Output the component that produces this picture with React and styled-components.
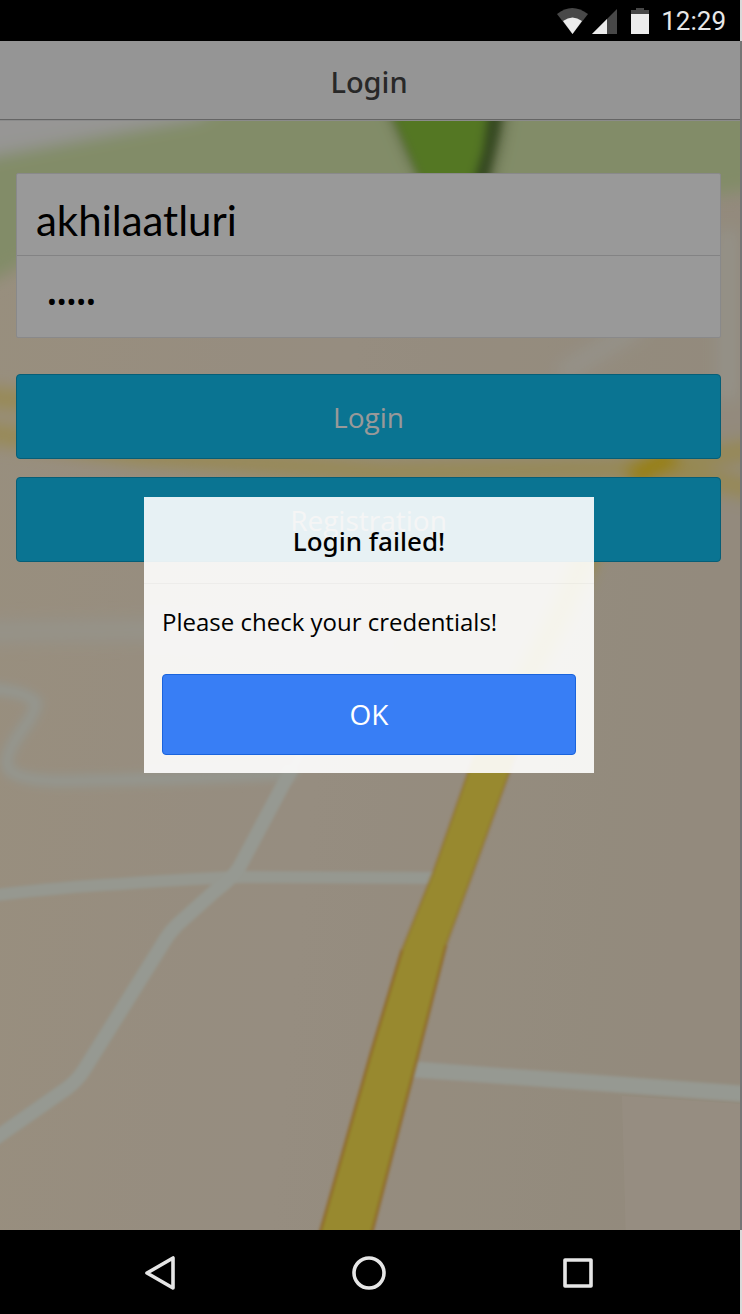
import React, { useState } from "react";
import styled, { createGlobalStyle, css } from "styled-components";

const GlobalStyle = createGlobalStyle`
  *, *::before, *::after { box-sizing: border-box; }
  body {
    margin: 0;
    background: #d9d9d9;
    font-family: "Open Sans", "Noto Sans", sans-serif;
  }
`;

const Device = styled.div`
  display: flex;
  flex-direction: column;
  min-height: 100vh;
  padding-right: 2px;
`;

const StatusBar = styled.div`
  display: flex;
  align-items: center;
  justify-content: flex-end;
  height: 41px;
  padding-right: 14px;
  background: #000;
  color: #e8e8e8;
`;

const StatusIcons = styled.svg`
  display: block;
  width: 92px;
  height: 26px;
  margin-right: 12px;
`;

const Clock = styled.time`
  font: 400 26px/40px Roboto, sans-serif;
`;

const Screen = styled.div`
  position: relative;
  flex: 1;
  display: flex;
  flex-direction: column;
  box-shadow: 2px 0 0 #757575;
`;

const TitleBar = styled.header`
  height: 79px;
  border-bottom: 1px solid #a8a8a8;
  background: #f8f8f8;
  color: #444;
`;

const Title = styled.h1`
  margin: 0;
  padding-right: 2px;
  font-family: "Noto Sans", "Open Sans", sans-serif;
  font-size: 29px;
  font-weight: 500;
  line-height: 82px;
  text-align: center;
`;

const Content = styled.main`
  position: relative;
  flex: 1;
  padding: 52px 19px 24px 16px;
  border-top: 1px solid #e8e8e8;
`;

const MapBackground = styled.svg`
  position: absolute;
  inset: 0;
  width: 100%;
  height: 100%;
`;

const Form = styled.form`
  position: relative;
  display: flex;
  flex-direction: column;
`;

const FieldList = styled.div`
  margin-bottom: 36px;
  border: 1px solid #e4e4e6;
  border-radius: 2px;
  background: #fff;
`;

const Field = styled.input`
  display: block;
  width: 100%;
  height: 81px;
  border: 0;
  outline: 0;
  background: transparent;
  color: #000;
  ${({ type }) =>
    type === "password"
      ? css`
          padding: 8px 30px 0;
          font: 26px/40px "Noto Sans", sans-serif;
        `
      : css`
          padding: 10px 19px 0;
          font: 42px/48px Lato, sans-serif;
        `}
  & + & {
    height: 82px;
    border-top: 1px solid #dadadc;
  }
`;

const tones = {
  calm: css`
    border-color: #0a9dc7;
    background: #11c1f3;
  `,
  positive: css`
    border-color: #1a63dc;
    background: #387ef5;
  `,
};

const Button = styled.button`
  width: 100%;
  height: ${({ $tone }) => ($tone === "calm" ? 85 : 81)}px;
  padding: 0;
  border: 1px solid;
  border-radius: 4px;
  color: #fff;
  font: 28px/40px "Open Sans", "Noto Sans", sans-serif;
  cursor: pointer;
  ${({ $tone }) => tones[$tone]}
  & + & {
    margin-top: 18px;
  }
`;

const Backdrop = styled.div`
  position: absolute;
  inset: 0;
  display: flex;
  align-items: center;
  justify-content: center;
  padding: 0 2px 2px 0;
  background: rgba(0, 0, 0, 0.4);
`;

const Popup = styled.section`
  width: 450px;
  max-width: 90%;
  background: rgba(255, 255, 255, 0.9);
  color: #000;
`;

const PopupTitle = styled.h2`
  margin: 0;
  border-bottom: 1px solid rgba(0, 0, 0, 0.03);
  padding: 24px 10px 22px;
  font-family: "Noto Sans", "Open Sans", sans-serif;
  font-size: 26px;
  font-weight: 500;
  line-height: 40px;
  text-align: center;
`;

const PopupMessage = styled.p`
  margin: 0;
  padding: 18px 18px 14px;
  font-size: 24px;
  line-height: 40px;
`;

const PopupActions = styled.div`
  display: flex;
  padding: 18px;
`;

const NavBar = styled.nav`
  display: flex;
  align-items: center;
  justify-content: center;
  gap: 161px;
  height: 84px;
  padding: 2px 2px 0 0;
  background: #000;
`;

const NavButton = styled.button`
  width: 48px;
  height: 48px;
  padding: 6px;
  border: 0;
  background: transparent;
  cursor: pointer;
  svg {
    display: block;
    fill: none;
    stroke: #e6e6e6;
    stroke-width: 3.6;
    stroke-linejoin: round;
  }
`;

function CityMap() {
  return (
    <MapBackground viewBox="0 121 740 1109" preserveAspectRatio="none" aria-hidden="true">
      <defs>
        <linearGradient id="ground" x1="0" y1="0" x2="1" y2="0.15">
          <stop offset="0" stopColor="#feeed3" />
          <stop offset="0.5" stopColor="#faebd5" />
          <stop offset="1" stopColor="#f5e7d0" />
        </linearGradient>
        <filter id="far" x="-20%" y="-20%" width="140%" height="140%">
          <feGaussianBlur stdDeviation="8" />
        </filter>
        <filter id="mid" x="-20%" y="-20%" width="140%" height="140%">
          <feGaussianBlur stdDeviation="4" />
        </filter>
        <filter id="near" x="-20%" y="-20%" width="140%" height="140%">
          <feGaussianBlur stdDeviation="1.6" />
        </filter>
      </defs>
      <rect y="100" width="740" height="1150" fill="url(#ground)" />
      <g filter="url(#far)">
        <path d="M-40 80H780V186L600 210L60 240Q20 270 -40 295Z" fill="#d9eaad" />
        <path d="M-40 80H250L200 118L-40 162Z" fill="#fcfaf8" />
        <path d="M376 80H512L502 140L484 210H440L410 160Z" fill="#8a9f62" />
      </g>
      <g filter="url(#mid)">
        <path d="M440 80H506L499 130L488 178L470 210Z" fill="#5a7a38" />
        <path d="M378 80H492L482 150L470 190L444 220L420 178Z" fill="#8cc63a" />
      </g>
      <g filter="url(#far)" fill="none">
        <path d="M-30 395L60 405M-30 430L140 455L380 472L640 468L780 445M640 465L780 495" stroke="#fde26e" strokeWidth="20" opacity="0.7" />
        <path d="M-30 632L160 630L380 640" stroke="#f9f5e6" strokeWidth="20" />
        <path d="M560 375L640 325M728 230V400" stroke="#f8f3e4" strokeWidth="20" />
        <path d="M676 455L630 478" stroke="#fdd520" strokeWidth="24" />
        <path d="M590 545L560 615L520 690" stroke="#fde54f" strokeWidth="20" />
      </g>
      <g filter="url(#mid)" fill="none">
        <g stroke="#f7faee" strokeWidth="12">
          <path d="M-20 688Q25 690 36 702Q36 712 22 730Q2 758 8 768Q14 780 60 781Q180 779 288 774" />
          <path d="M310 735L288 778" />
        </g>
      </g>
      <g filter="url(#near)" fill="none" stroke="#fafff3" strokeLinejoin="round">
        <path d="M-20 897Q60 887 120 884Q200 878 245 877L436 878" strokeWidth="12" opacity="0.9" />
        <path d="M292 768L240 866Q234 877 215 891L177 925Q168 934 162 945L84 1070Q77 1081 66 1089L-20 1149" strokeWidth="14" />
        <path d="M408 1069L760 1095" strokeWidth="16" />
      </g>
      <path d="M622 1096L740 1104V1240H626Z" fill="#ffefdc" opacity="0.6" />
      <g filter="url(#near)" strokeLinejoin="round">
        <path
          d="M488 720L468 773L433 873L402 950L371 1053L318 1240H370L411 1082L427 1020L446 945L472 875L509 773L528 720Z"
          fill="#fde54f"
        />
        <g fill="none" stroke="#efa93c" strokeWidth="3">
          <path d="M488 720L468 773L433 873L402 950" opacity="0.4" />
          <path d="M528 720L509 773L472 875L446 945" opacity="0.4" />
          <path d="M402 950L371 1053L318 1240" opacity="0.8" />
          <path d="M370 1240L411 1082L427 1020L446 945" opacity="0.8" />
        </g>
      </g>
    </MapBackground>
  );
}

function StatusGlyphs() {
  return (
    <StatusIcons viewBox="0 0 92 26" role="img" aria-label="Wi-Fi, signal, battery">
      <path d="M0 6Q15 -6 31 6L15.500 26Z" fill="#484848" />
      <path d="M6 13Q15.500 6 25 13L15.500 26Z" fill="#ececec" />
      <path d="M60 1V26H35Z" fill="#484848" />
      <path d="M50 11V26H35Z" fill="#ececec" />
      <path d="M74 2H79V0H87V2H92V7H74Z" fill="#484848" />
      <path d="M74 6H92V26H74Z" fill="#ececec" />
    </StatusIcons>
  );
}

export default function App() {
  const [username, setUsername] = useState("akhilaatluri");
  const [password, setPassword] = useState("login");
  const [failed, setFailed] = useState(true);

  const submit = (event) => {
    event.preventDefault();
    setFailed(true);
  };

  return (
    <>
      <GlobalStyle />
      <Device>
        <StatusBar>
          <StatusGlyphs />
          <Clock>12:29</Clock>
        </StatusBar>
        <Screen>
          <TitleBar>
            <Title>Login</Title>
          </TitleBar>
          <Content>
            <CityMap />
            <Form onSubmit={submit}>
              <FieldList>
                <Field
                  type="text"
                  aria-label="Username"
                  spellCheck={false}
                  value={username}
                  onChange={(e) => setUsername(e.target.value)}
                />
                <Field
                  type="password"
                  aria-label="Password"
                  value={password}
                  onChange={(e) => setPassword(e.target.value)}
                />
              </FieldList>
              <Button type="submit" $tone="calm">Login</Button>
              <Button type="button" $tone="calm">Registration</Button>
            </Form>
          </Content>
          {failed && (
            <Backdrop>
              <Popup role="alertdialog" aria-labelledby="popup-title" aria-describedby="popup-message">
                <PopupTitle id="popup-title">Login failed!</PopupTitle>
                <PopupMessage id="popup-message">Please check your credentials!</PopupMessage>
                <PopupActions>
                  <Button type="button" $tone="positive" onClick={() => setFailed(false)}>OK</Button>
                </PopupActions>
              </Popup>
            </Backdrop>
          )}
        </Screen>
        <NavBar aria-label="System">
          <NavButton aria-label="Back">
            <svg width="36" height="36" viewBox="0 0 36 36"><path d="M31 3V33L5 18Z" /></svg>
          </NavButton>
          <NavButton aria-label="Home">
            <svg width="36" height="36" viewBox="0 0 36 36"><circle cx="18" cy="18" r="15" /></svg>
          </NavButton>
          <NavButton aria-label="Recent apps">
            <svg width="36" height="36" viewBox="0 0 36 36"><path d="M5 5H31V31H5Z" /></svg>
          </NavButton>
        </NavBar>
      </Device>
    </>
  );
}
